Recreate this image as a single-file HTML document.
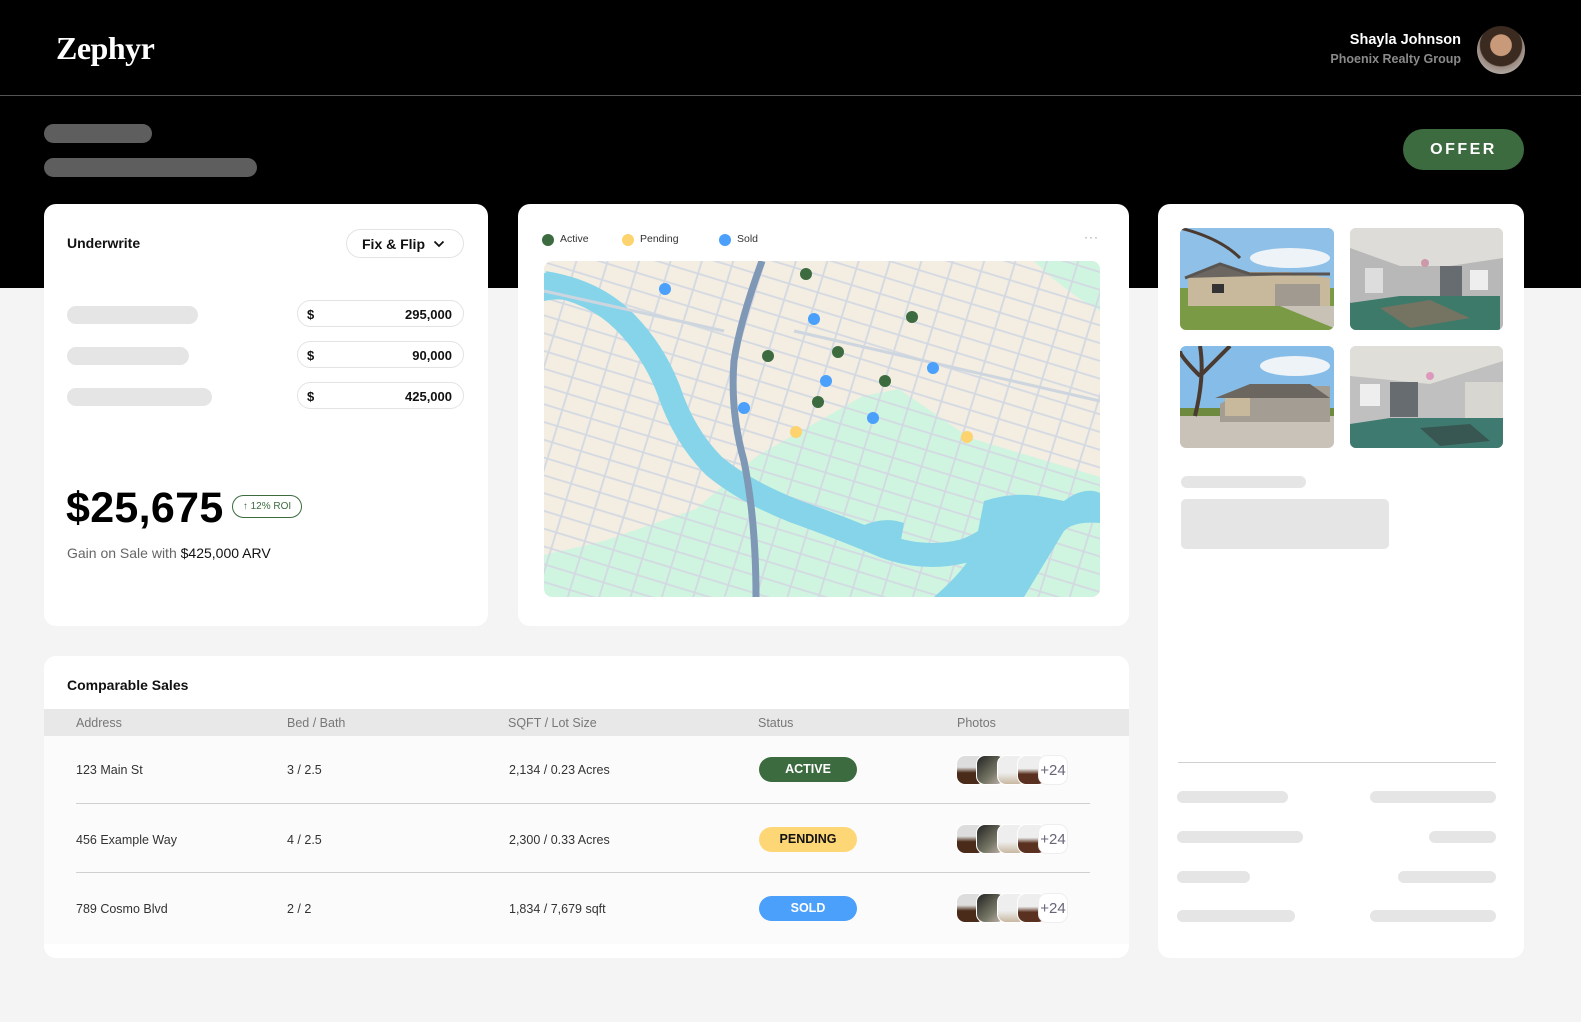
<!DOCTYPE html>
<html><head><meta charset="utf-8"><style>
*{box-sizing:border-box;margin:0;padding:0}
body{width:1581px;height:1022px;background:#f4f4f4;font-family:"Liberation Sans",sans-serif;position:relative;overflow:hidden;color:#111}
.abs{position:absolute}
.top{left:0;top:0;width:1581px;height:288px;background:#000}
.card{position:absolute;background:#fff;border-radius:12px}
.sk{position:absolute;background:#e5e5e5;border-radius:10px}
.inp{position:absolute;left:297px;width:167px;height:27px;border:1px solid #e3e3e3;border-radius:14px;font-size:13px;font-weight:bold;color:#111}
.inp span{position:absolute;top:6px}
.th{position:absolute;top:716px;font-size:12.5px;color:#777}
.td{position:absolute;font-size:12.5px;color:#333}
.pill{position:absolute;left:759px;width:98px;height:25px;border-radius:13px;font-size:12.5px;font-weight:bold;text-align:center;line-height:25px}
.thumbs{position:absolute;left:956px;width:115px;height:30px}
.thumbs i{position:absolute;top:0;width:30px;height:30px;border-radius:9px;border:1px solid #fff}
.thumbs b{position:absolute;left:82px;top:0;width:30px;height:30px;border-radius:9px;background:#fff;border:1px solid #eee;font-weight:normal;color:#667;font-size:15px;line-height:30px;text-align:center}
.hr{position:absolute;height:1px;background:#d0d0d0}
</style></head><body>
<div class="abs top"></div>
<div class="abs" style="left:0;top:95px;width:1581px;height:1px;background:#555"></div>
<div class="abs" style="left:56px;top:30px;font-family:'Liberation Serif',serif;font-size:32px;font-weight:bold;color:#fff;letter-spacing:-0.5px">Zephyr</div>
<div class="abs" style="right:120px;top:32px;font-size:14.5px;font-weight:bold;color:#fff;text-align:right">Shayla Johnson</div>
<div class="abs" style="right:120px;top:52px;font-size:12.5px;font-weight:bold;color:#8a8a8a;text-align:right">Phoenix Realty Group</div>
<div class="abs" style="left:1477px;top:26px;width:48px;height:48px;border-radius:50%;background:radial-gradient(circle at 50% 40%,#c99a7a 0 28%,#3a2a20 30% 55%,#9a8a80 58%,#ccc 100%)"></div>
<div class="abs" style="left:44px;top:124px;width:108px;height:19px;border-radius:10px;background:#5e5e5e"></div>
<div class="abs" style="left:44px;top:158px;width:213px;height:19px;border-radius:10px;background:#5e5e5e"></div>
<div class="abs" style="left:1403px;top:129px;width:121px;height:41px;border-radius:21px;background:#3d6b40;color:#fff;font-weight:bold;font-size:16px;letter-spacing:2.5px;text-align:center;line-height:41px">OFFER</div>

<div class="card" style="left:44px;top:204px;width:444px;height:422px"></div>
<div class="abs" style="left:67px;top:235px;font-size:14px;font-weight:bold">Underwrite</div>
<div class="abs" style="left:346px;top:229px;width:118px;height:29px;border:1px solid #e3e3e3;border-radius:15px;font-size:14px;font-weight:bold;padding:6px 0 0 15px">Fix &amp; Flip
<svg class="abs" style="left:86px;top:10px" width="12" height="8" viewBox="0 0 12 8"><path d="M1.5 1.5L6 6l4.5-4.5" fill="none" stroke="#111" stroke-width="1.8"/></svg></div>
<div class="sk" style="left:67px;top:306px;width:131px;height:18px"></div>
<div class="sk" style="left:67px;top:347px;width:122px;height:18px"></div>
<div class="sk" style="left:67px;top:388px;width:145px;height:18px"></div>
<div class="inp" style="top:300px"><span style="left:9px">$</span><span style="right:11px">295,000</span></div>
<div class="inp" style="top:341px"><span style="left:9px">$</span><span style="right:11px">90,000</span></div>
<div class="inp" style="top:382px"><span style="left:9px">$</span><span style="right:11px">425,000</span></div>
<div class="abs" style="left:66px;top:484px;font-size:43px;font-weight:bold;letter-spacing:0.3px;color:#000">$25,675</div>
<div class="abs" style="left:232px;top:495px;width:70px;height:23px;border:1.3px solid #3d6b40;border-radius:12px;font-size:10px;color:#3d6b40;text-align:center;line-height:21px">↑ 12% ROI</div>
<div class="abs" style="left:67px;top:545px;font-size:14px;color:#666">Gain on Sale with <span style="color:#111">$425,000 ARV</span></div>

<div class="card" style="left:518px;top:204px;width:611px;height:422px"></div>
<div class="abs" style="left:542px;top:234px;width:12px;height:12px;border-radius:50%;background:#3d6b40"></div>
<div class="abs" style="left:560px;top:233px;font-size:10.5px;color:#333">Active</div>
<div class="abs" style="left:622px;top:234px;width:12px;height:12px;border-radius:50%;background:#fcd36f"></div>
<div class="abs" style="left:640px;top:233px;font-size:10.5px;color:#333">Pending</div>
<div class="abs" style="left:719px;top:234px;width:12px;height:12px;border-radius:50%;background:#4aa0fa"></div>
<div class="abs" style="left:737px;top:233px;font-size:10.5px;color:#333">Sold</div>
<div class="abs" style="left:1084px;top:230px;font-size:12px;color:#999;letter-spacing:1px">···</div>
<svg class="abs" style="left:544px;top:261px;border-radius:8px" width="556" height="336" viewBox="0 0 556 336">
<defs>
<pattern id="g" width="30" height="17" patternUnits="userSpaceOnUse" patternTransform="rotate(17)"><path d="M0 1H30M1 0V17" stroke="#d3d9e2" stroke-width="1.8" fill="none"/></pattern>
<clipPath id="c"><rect width="556" height="336" rx="8"/></clipPath>
</defs>
<g clip-path="url(#c)">
<rect width="556" height="336" fill="#f3ede2"/>
<path d="M0 294L60 280L152 248L213 195L319 135L355 128L426 177L556 216V336H0Z" fill="#cff5e0"/>
<path d="M490 0H556V50Q520 30 490 0Z" fill="#cff5e0"/>
<rect width="556" height="336" fill="url(#g)"/>
<path d="M0 22Q50 30 80 60Q110 90 125 130Q140 175 170 205Q200 230 250 250Q300 268 340 285Q380 300 420 290Q450 280 470 250" fill="none" stroke="#85d4ea" stroke-width="24"/>
<path d="M0 12Q40 15 70 45L40 45Q20 35 0 40Z" fill="#85d4ea"/>
<path d="M440 240Q470 230 500 236L520 240Q540 225 556 232V262Q530 260 520 270L480 336H390Q420 310 430 290Z" fill="#85d4ea"/>
<path d="M318 265Q340 255 360 262L355 290Q335 285 318 278Z" fill="#85d4ea"/>
<path d="M218 0Q196 60 190 100Q186 150 200 200Q212 260 212 336" fill="none" stroke="#7f98b6" stroke-width="7"/>
<path d="M0 30L180 70M250 70L556 140" stroke="#cdd5df" stroke-width="3" fill="none"/>
</g>
<g>
<circle cx="121" cy="28" r="6" fill="#4aa0fa"/>
<circle cx="262" cy="13" r="6" fill="#3d6b40"/>
<circle cx="270" cy="58" r="6" fill="#4aa0fa"/>
<circle cx="368" cy="56" r="6" fill="#3d6b40"/>
<circle cx="224" cy="95" r="6" fill="#3d6b40"/>
<circle cx="294" cy="91" r="6" fill="#3d6b40"/>
<circle cx="282" cy="120" r="6" fill="#4aa0fa"/>
<circle cx="341" cy="120" r="6" fill="#3d6b40"/>
<circle cx="389" cy="107" r="6" fill="#4aa0fa"/>
<circle cx="200" cy="147" r="6" fill="#4aa0fa"/>
<circle cx="274" cy="141" r="6" fill="#3d6b40"/>
<circle cx="329" cy="157" r="6" fill="#4aa0fa"/>
<circle cx="252" cy="171" r="6" fill="#fcd36f"/>
<circle cx="423" cy="176" r="6" fill="#fcd36f"/>
</g>
</svg>

<div class="card" style="left:1158px;top:204px;width:366px;height:754px"></div>
<svg class="abs" style="left:1180px;top:228px" width="154" height="102" viewBox="0 0 154 102"><defs><clipPath id="r1"><rect width="154" height="102" rx="6"/></clipPath></defs><g clip-path="url(#r1)"><rect width="154" height="60" fill="#8ec0e8"/><ellipse cx="110" cy="30" rx="40" ry="10" fill="#eef3f8"/><rect y="60" width="154" height="42" fill="#7a9a45"/><path d="M8 50L40 38L60 44L110 44L150 50V78H8Z" fill="#c8b89c"/><path d="M5 50L40 36L70 46L150 46" fill="#6b6660" stroke="#5a5550" stroke-width="3"/><rect x="95" y="56" width="45" height="22" fill="#a19a90"/><rect x="32" y="56" width="12" height="9" fill="#333"/><path d="M0 0Q40 10 60 30" stroke="#4a3a30" stroke-width="3" fill="none"/><path d="M100 78L154 100V78Z" fill="#c8c2b6"/></g></svg>
<svg class="abs" style="left:1350px;top:228px" width="153" height="102" viewBox="0 0 153 102"><defs><clipPath id="r2"><rect width="153" height="102" rx="6"/></clipPath></defs><g clip-path="url(#r2)"><rect width="153" height="102" fill="#b8b8b8"/><path d="M0 0H153V30L100 38H50L0 20Z" fill="#dedcd8"/><rect x="90" y="38" width="22" height="35" fill="#666c70"/><rect x="120" y="42" width="18" height="20" fill="#eee"/><rect x="15" y="40" width="18" height="25" fill="#ddd"/><path d="M0 75L50 68H150V102H0Z" fill="#3d7a6a"/><path d="M30 80L80 72L120 90L60 100Z" fill="#8d7060" opacity=".7"/><circle cx="75" cy="35" r="4" fill="#c9a"/></g></svg>
<svg class="abs" style="left:1180px;top:346px" width="154" height="102" viewBox="0 0 154 102"><defs><clipPath id="r3"><rect width="154" height="102" rx="6"/></clipPath></defs><g clip-path="url(#r3)"><rect width="154" height="70" fill="#86bde8"/><ellipse cx="115" cy="20" rx="35" ry="10" fill="#eef3f8"/><ellipse cx="90" cy="48" rx="30" ry="8" fill="#eef3f8"/><rect y="66" width="154" height="36" fill="#c9c2b8"/><rect y="62" width="154" height="8" fill="#6d8a3e"/><path d="M40 58L70 40L150 40V76H40Z" fill="#a39d94"/><path d="M35 52L70 38L130 38L150 52" fill="#6b6660"/><rect x="45" y="52" width="25" height="18" fill="#c8b89c"/><path d="M20 0Q25 30 15 70M20 30Q0 10 0 5M20 30Q40 10 50 0" stroke="#4a3a30" stroke-width="4" fill="none"/></g></svg>
<svg class="abs" style="left:1350px;top:346px" width="153" height="102" viewBox="0 0 153 102"><defs><clipPath id="r4"><rect width="153" height="102" rx="6"/></clipPath></defs><g clip-path="url(#r4)"><rect width="153" height="102" fill="#c0c0c0"/><path d="M0 0H153V15L80 38L0 30Z" fill="#e0ded8"/><rect x="40" y="36" width="28" height="35" fill="#666c70"/><rect x="10" y="38" width="20" height="22" fill="#eee"/><rect x="115" y="36" width="38" height="36" fill="#d8d6d0"/><path d="M0 78L40 72H153V102H0Z" fill="#3f7a70"/><path d="M70 82L120 78L140 95L90 100Z" fill="#333" opacity=".5"/><circle cx="80" cy="30" r="4" fill="#d9b"/></g></svg>
<div class="sk" style="left:1181px;top:476px;width:125px;height:12px;border-radius:6px"></div>
<div class="sk" style="left:1181px;top:499px;width:208px;height:50px;border-radius:5px"></div>
<div class="hr" style="left:1178px;top:762px;width:318px"></div>
<div class="sk" style="left:1177px;top:791px;width:111px;height:12px;border-radius:6px"></div>
<div class="sk" style="left:1370px;top:791px;width:126px;height:12px;border-radius:6px"></div>
<div class="sk" style="left:1177px;top:831px;width:126px;height:12px;border-radius:6px"></div>
<div class="sk" style="left:1429px;top:831px;width:67px;height:12px;border-radius:6px"></div>
<div class="sk" style="left:1177px;top:871px;width:73px;height:12px;border-radius:6px"></div>
<div class="sk" style="left:1398px;top:871px;width:98px;height:12px;border-radius:6px"></div>
<div class="sk" style="left:1177px;top:910px;width:118px;height:12px;border-radius:6px"></div>
<div class="sk" style="left:1370px;top:910px;width:126px;height:12px;border-radius:6px"></div>

<div class="card" style="left:44px;top:656px;width:1085px;height:302px;overflow:hidden">
<div class="abs" style="left:0;top:53px;width:1085px;height:27px;background:#e8e8e8"></div>
<div class="abs" style="left:0;top:80px;width:1085px;height:208px;background:#fbfbfb"></div>
</div>
<div class="abs" style="left:67px;top:677px;font-size:14px;font-weight:bold">Comparable Sales</div>
<div class="th" style="left:76px">Address</div>
<div class="th" style="left:287px">Bed / Bath</div>
<div class="th" style="left:508px">SQFT / Lot Size</div>
<div class="th" style="left:758px">Status</div>
<div class="th" style="left:957px">Photos</div>

<div class="td" style="left:76px;top:763px">123 Main St</div>
<div class="td" style="left:287px;top:763px">3 / 2.5</div>
<div class="td" style="left:509px;top:763px">2,134 / 0.23 Acres</div>
<div class="pill" style="top:757px;background:#3d6b40;color:#fff">ACTIVE</div>
<div class="hr" style="left:76px;top:803px;width:1014px"></div>
<div class="td" style="left:76px;top:833px">456 Example Way</div>
<div class="td" style="left:287px;top:833px">4 / 2.5</div>
<div class="td" style="left:509px;top:833px">2,300 / 0.33 Acres</div>
<div class="pill" style="top:827px;background:#fdd676;color:#111">PENDING</div>
<div class="hr" style="left:76px;top:872px;width:1014px"></div>
<div class="td" style="left:76px;top:902px">789 Cosmo Blvd</div>
<div class="td" style="left:287px;top:902px">2 / 2</div>
<div class="td" style="left:509px;top:902px">1,834 / 7,679 sqft</div>
<div class="pill" style="top:896px;background:#4aa0fa;color:#fff">SOLD</div>

<div class="thumbs" style="top:755px"><i style="left:0;background:linear-gradient(#ddd 40%,#4a2a18 60%)"></i><i style="left:20px;background:linear-gradient(135deg,#222,#776 60%,#cbb)"></i><i style="left:41px;background:linear-gradient(#eee 60%,#c8b8a0)"></i><i style="left:61px;background:linear-gradient(#eee 45%,#5a3020 65%)"></i><b>+24</b></div>
<div class="thumbs" style="top:824px"><i style="left:0;background:linear-gradient(#ddd 40%,#4a2a18 60%)"></i><i style="left:20px;background:linear-gradient(135deg,#222,#776 60%,#cbb)"></i><i style="left:41px;background:linear-gradient(#eee 60%,#c8b8a0)"></i><i style="left:61px;background:linear-gradient(#eee 45%,#5a3020 65%)"></i><b>+24</b></div>
<div class="thumbs" style="top:893px"><i style="left:0;background:linear-gradient(#ddd 40%,#4a2a18 60%)"></i><i style="left:20px;background:linear-gradient(135deg,#222,#776 60%,#cbb)"></i><i style="left:41px;background:linear-gradient(#eee 60%,#c8b8a0)"></i><i style="left:61px;background:linear-gradient(#eee 45%,#5a3020 65%)"></i><b>+24</b></div>
</body></html>
